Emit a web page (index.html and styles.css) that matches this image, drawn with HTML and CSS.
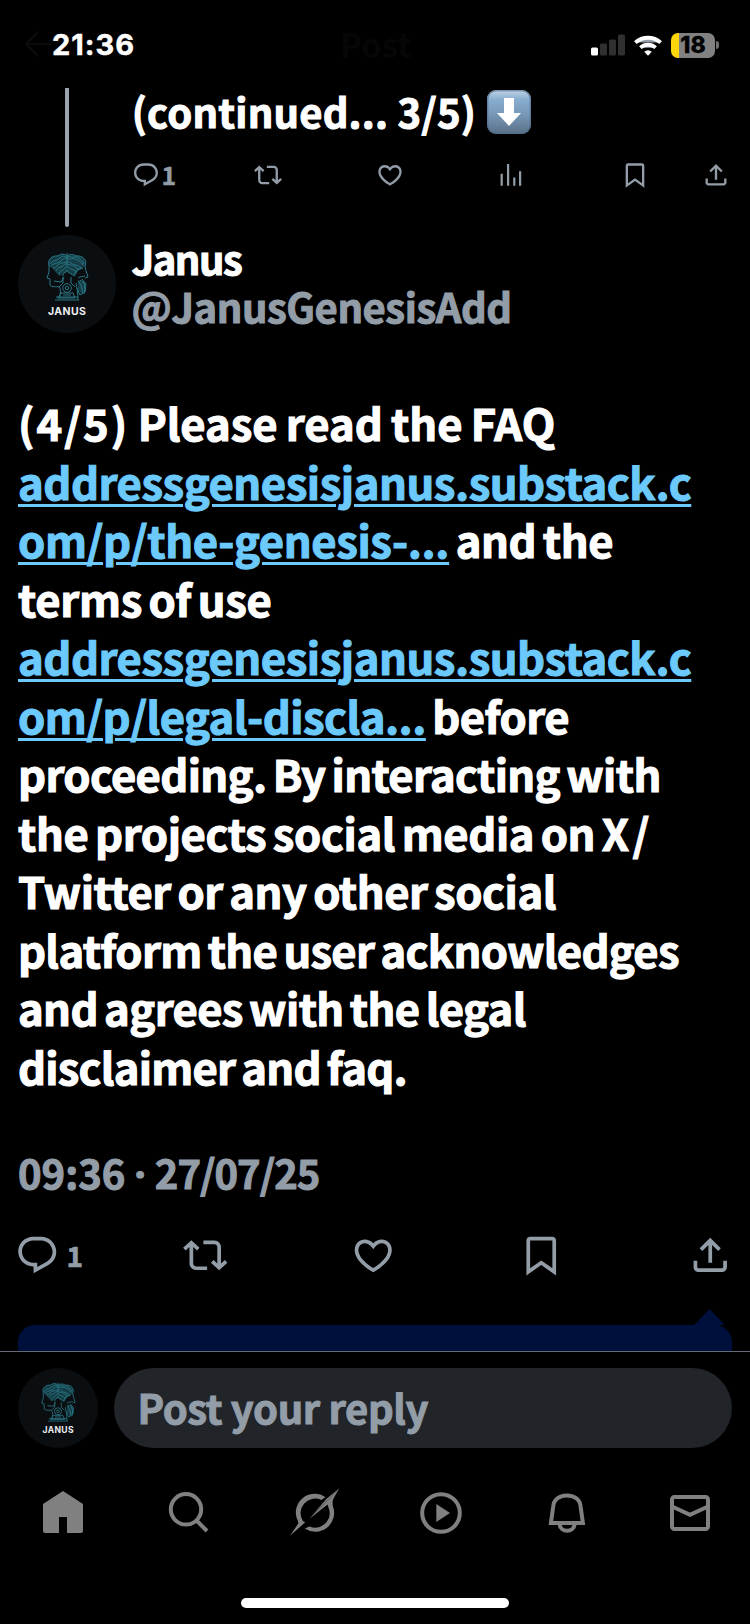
FILE: index.html
```html
<!DOCTYPE html>
<html lang="en">
<head>
<meta charset="utf-8">
<title>Post</title>
<link rel="stylesheet" href="styles.css">
</head>
<body>
<svg class="defs" aria-hidden="true">
  <symbol id="reply" viewBox="0 0 24 24"><path d="M1.751 10c0-4.42 3.584-8 8.005-8h4.366c4.49 0 8.129 3.64 8.129 8.13 0 2.96-1.607 5.68-4.196 7.11l-8.054 4.46v-3.69h-.067c-4.49.1-8.183-3.51-8.183-8.01zm8.005-6c-3.317 0-6.005 2.69-6.005 6 0 3.37 2.77 6.08 6.138 6.01l.351-.01h1.761v2.3l5.087-2.81c1.951-1.08 3.163-3.13 3.163-5.36 0-3.39-2.744-6.13-6.129-6.13H9.756z"/></symbol>
  <symbol id="repost" viewBox="0 0 24 24"><path d="M4.5 3.88l4.432 4.14-1.364 1.46L5.5 7.55V16.500c0 .8.700 1.500 1.500 1.500H13v2H7c-1.900 0-3.500-1.600-3.500-3.500V7.55L1.432 9.48.068 8.02 4.5 3.88zM17 6H11V4h6c1.900 0 3.500 1.600 3.500 3.500v8.95l2.068-1.93 1.364 1.46-4.432 4.14-4.432-4.14 1.364-1.46 2.068 1.93V7.500c0-.8-.7-1.500-1.500-1.500z"/></symbol>
  <symbol id="like" viewBox="0 0 24 24"><path d="M16.697 5.5c-1.222-.06-2.679.51-3.89 2.16l-.805 1.09-.806-1.09C9.984 6.01 8.526 5.44 7.304 5.5c-1.243.07-2.349.78-2.91 1.91-.552 1.12-.633 2.78.479 4.82 1.074 1.97 3.257 4.27 7.129 6.61 3.87-2.34 6.052-4.64 7.126-6.61 1.111-2.04 1.03-3.7.477-4.82-.561-1.13-1.666-1.84-2.908-1.91zm4.187 7.69c-1.351 2.48-4.001 5.12-8.379 7.67l-.503.3-.504-.3c-4.379-2.55-7.029-5.19-8.382-7.67-1.36-2.5-1.41-4.86-.514-6.67.887-1.79 2.647-2.91 4.601-3.01 1.651-.09 3.368.56 4.798 2.01 1.429-1.45 3.146-2.1 4.796-2.01 1.954.1 3.714 1.22 4.601 3.01.896 1.81.846 4.17-.514 6.67z"/></symbol>
  <symbol id="views" viewBox="0 0 24 24"><path d="M2.200 11h1.900v10.300H2.200zM7.700 2.600h1.900v18.700H7.700zM13 14.200h1.900v7.100H13zM18 8.700h1.900v12.600H18z"/></symbol>
  <symbol id="bookmark" viewBox="0 0 24 24"><path d="M4 4c0-1.100.9-2 2-2h12c1.100 0 2 .9 2 2v18.940l-8-5.710-8 5.710V4zm2 0v15.060l6-4.290 6 4.290V4H6z"/></symbol>
  <symbol id="share" viewBox="0 0 24 24"><path d="M12 2.59l5.7 5.7-1.41 1.42L13 6.41V16h-2V6.41l-3.3 3.3-1.41-1.42L12 2.59zM21 15l-.02 3.51c0 1.38-1.12 2.49-2.5 2.49H5.5C4.11 21 3 19.88 3 18.5V15h2v3.5c0 .28.22.5.5.5h12.98c.28 0 .5-.22.5-.5L19 15h2z"/></symbol>
  <symbol id="janus" viewBox="0 0 98 98">
    <circle cx="49" cy="49" r="49" fill="#0a0e11"/>
    <path d="M31 31c-2-6 3-11 9-10 3-3 8-2 9 0 2-2 7-2 9 0 6-1 12 4 9 10l-7 5-3 6-8-5-8 4-6-7zM60 45l7 2 1 8-4 5-4-6z" fill="#1c5762" fill-opacity=".65"/>
    <g fill="none" stroke="#2a7886" stroke-width="1">
      <path d="M31 31c-2-6 3-11 9-10 3-3 8-2 9 0 2-2 7-2 9 0 6-1 12 4 9 10M31 31v6l-2 6 3 1v6c2 3 6 1 9 2M67 31l1 5 2 6-3 1M41 52c3 4 1 8-1 12M37 65h24M38 62h22M58 48c1 5 2 10 2 17"/>
      <path d="M32 29c4-5 6-2 10-6s6 0 8-1 5 1 7 0 6 2 9 7M33 31c4-4 8-2 11-6s7 0 9-1 8 0 12 6M35 33c5 0 4-5 9-5s5-3 9 0 6 1 10 5M38 36c2-5 6-3 8-6s6 1 7 0 5 3 8 4M41 39c2-5 5-3 6-6s5 1 6 1 4 2 6 3M45 41c0-4 3-3 4-6 1 4 4 2 5 5M49 18v13"/>
      <path d="M65 33l-6 2-4 6M36 46l7 1 3-5M45 42v6l-4 4M53 42v6l4 4"/>
      <circle cx="49" cy="53" r="4.300"/><circle cx="49" cy="53" r="1.700"/>
      <path d="M60 43c2-2 5-1 7-2M60 46l3 4 2 8-3 2-3-7M62 45l4 3 1 6-1 5M64 44l4 5-1 8M43 58l-2 5h16l-2-5zM45 60h8"/>
    </g>
    <text x="49" y="79.500" text-anchor="middle" textLength="38" class="logo-text">JANUS</text>
  </symbol>
</svg>

<header class="status">
  <svg class="ghost-back" viewBox="0 0 26 26"><path d="M13 1L1 13l12 12M1 13h25"/></svg>
  <span class="time">21:36</span>
  <span class="ghost-title">Post</span>
  <div class="status-icons">
    <svg class="signal" viewBox="0 0 34 22"><rect x="0" y="13.500" width="7" height="8" rx="1.500" fill="#fff"/><g fill="#303030"><rect x="9" y="9.500" width="7" height="12" rx="1.500"/><rect x="18" y="5.500" width="7" height="16" rx="1.500"/><rect x="27" y="0.500" width="7" height="21" rx="1.500"/></g></svg>
    <svg class="wifi" viewBox="0 0 28 21" fill="none" stroke="#fff"><path d="M1.400 7.600a18.500 18.500 0 0 1 25.200 0" stroke-width="4"/><path d="M6.400 12.700a11.300 11.300 0 0 1 15.200 0" stroke-width="3.800"/><path d="M14 20.700l-3.800-3.900a5.800 5.800 0 0 1 7.600 0z" fill="#fff" stroke="none"/></svg>
    <div class="battery"><span class="battery-num">18</span></div>
    <span class="battery-cap"></span>
  </div>
</header>

<main class="thread">
  <article class="prev">
    <div class="rail"></div>
    <div class="prev-body">
      <div class="prev-text"><span class="prev-label">(continued... 3/5)</span>
        <svg class="emoji" viewBox="0 0 44 44"><defs><linearGradient id="sky" x1="0" y1="0" x2="0" y2="1"><stop offset="0" stop-color="#c2d6e6"/><stop offset=".22" stop-color="#88add0"/><stop offset=".55" stop-color="#7898b8"/><stop offset="1" stop-color="#587087"/></linearGradient></defs><rect width="44" height="44" rx="9" fill="url(#sky)"/><rect x=".7" y=".7" width="42.600" height="42.600" rx="8.500" fill="none" stroke="#4d6b88" stroke-opacity=".6" stroke-width="1.400"/><path d="M17 8h10v15h7L22 36 10 23h7z" fill="#fff"/></svg>
      </div>
      <div class="prev-actions">
        <div class="count-wrap"><svg><use href="#reply"/></svg><span>1</span></div>
        <svg><use href="#repost"/></svg>
        <svg><use href="#like"/></svg>
        <svg><use href="#views"/></svg>
        <svg><use href="#bookmark"/></svg>
        <svg><use href="#share"/></svg>
      </div>
    </div>
  </article>

  <article class="post">
    <div class="author">
      <svg class="avatar"><use href="#janus"/></svg>
      <div class="names"><span class="name">Janus</span><span class="handle">@JanusGenesisAdd</span></div>
    </div>
    <p class="body">
      <span class="line l1"><span class="part">(4/5)</span> Please read the FAQ</span>
      <span class="line l2"><a>addressgenesisjanus.substack.c</a></span>
      <span class="line l3"><a>om/p/the-genesis-...</a> and the</span>
      <span class="line l4">terms of use</span>
      <span class="line l2"><a>addressgenesisjanus.substack.c</a></span>
      <span class="line l6"><a>om/p/legal-discla...</a> before</span>
      <span class="line l7">proceeding. By interacting with</span>
      <span class="line l8">the projects social media on <span class="wide">X/</span></span>
      <span class="line l9">Twitter or any other social</span>
      <span class="line l10">platform the user acknowledges</span>
      <span class="line l11">and agrees with the legal</span>
      <span class="line l12">disclaimer and faq.</span>
    </p>
    <time class="date">09:36 <span class="dot">·</span> <span class="day">27/07/25</span></time>
    <div class="actions">
      <div class="count-wrap"><svg><use href="#reply"/></svg><span>1</span></div>
      <svg><use href="#repost"/></svg>
      <svg><use href="#like"/></svg>
      <svg><use href="#bookmark"/></svg>
      <svg><use href="#share"/></svg>
    </div>
    <div class="banner"></div>
  </article>
</main>

<section class="reply-bar">
  <svg class="avatar-sm"><use href="#janus"/></svg>
  <div class="reply-field"><span>Post your reply</span></div>
</section>

<nav class="tabs">
  <svg viewBox="0 0 50 50"><path d="M25 3l20 13v27q0 2-2 2H29V29h-8v16H7q-2 0-2-2V16z"/></svg>
  <svg viewBox="0 0 50 50" class="stroked"><circle cx="22" cy="21.300" r="15.200"/><path d="M32.500 32.500L43 43"/></svg>
  <svg viewBox="0 0 50 50"><path d="M35.500 9.200A18.800 18.800 0 0 0 8 33.300L8.300 35.500 0 47.700 15.300 34.300 13 33.200A14.500 14.500 0 0 1 31.200 12z"/><path d="M49.300.3L43.500 10.500Q42 14 43 18.500A18.800 18.800 0 0 1 14.800 40.500L19.500 38.400A14.500 14.500 0 0 0 39.300 22L37.500 16.500 19.300 31z"/><path d="M49.300.3L19.300 31l17-20z"/></svg>
  <svg viewBox="0 0 50 50" class="stroked"><circle cx="25" cy="25" r="18.800"/><path class="solid" d="M20.300 16L34 25l-13.700 9z"/></svg>
  <svg viewBox="0 0 50 50" class="stroked"><path d="M8.900 35L11.200 18.500C12.200 3.700 37.600 3.700 38.600 18.500L40.900 35z"/><path d="M17.600 36.500c1 8.400 14 8.400 15 0"/></svg>
  <svg viewBox="0 0 50 50" class="stroked"><rect x="4" y="9" width="36" height="32" rx="2.500"/><path d="M4 18.500l18 8.400 18-8.400"/></svg>
</nav>
<div class="home-indicator"></div>
</body>
</html>
```

FILE: styles.css
```css
* { box-sizing: border-box; }
body {
  margin: 0;
  width: 750px;
  height: 1624px;
  overflow: hidden;
  background: #000;
  color: #fff;
  font-family: "Noto Sans CJK SC", "Noto Sans", sans-serif;
  font-weight: 700;
  display: flex;
  flex-direction: column;
}
svg { display: block; flex: none; fill: #939da8; }
.defs { position: absolute; width: 0; height: 0; }
.logo-text { font: 700 10.5px Inter, sans-serif; fill: #eceff1; -webkit-text-stroke: 0; }

.status {
  height: 88px;
  flex: none;
  position: relative;
  display: flex;
  justify-content: space-between;
  align-items: flex-start;
  padding: 30px 31px 0 52px;
  font-family: Inter, sans-serif;
}
.time { font-size: 29px; line-height: 30px; letter-spacing: 1px; -webkit-text-stroke: .5px; }
.ghost-back { position: absolute; left: 25px; top: 31px; width: 26px; height: 26px; fill: none; stroke: #0b0b0b; stroke-width: 2.5; }
.ghost-title { position: absolute; left: 340px; top: 20px; font: 700 33px/48px "Noto Sans CJK SC", sans-serif; color: #060606; }
.status-icons { display: flex; align-items: center; height: 30px; }
.signal { width: 34px; height: 22px; }
.wifi { width: 28px; height: 21px; margin-left: 9px; }
.battery {
  width: 44px;
  height: 25px;
  margin-left: 9px;
  border-radius: 7px;
  background: linear-gradient(90deg, #ffd60a 8.5px, #818181 8.5px);
  color: #000;
  text-align: center;
}
.battery-num { display: block; font-size: 23px; line-height: 25px; font-weight: 800; -webkit-text-stroke: .3px; }
.battery-cap { width: 3px; height: 8px; margin-left: 1px; border-radius: 0 3px 3px 0; background: #707070; }

.thread { height: 1263px; flex: none; overflow: hidden; display: flex; flex-direction: column; }
.prev { display: flex; height: 147px; flex: none; padding-left: 65px; }
.rail { width: 4px; height: 139px; background: #9aa4b1; border-radius: 0 0 2px 2px; }
.prev-body { flex: 1; padding-left: 62.8px; }
.prev-text { display: flex; height: 73px; align-items: flex-start; padding-top: 2px; }
.prev-label { width: 355.5px; font-size: 40px; line-height: 42px; letter-spacing: .2px; white-space: nowrap; -webkit-text-stroke: 1px; }
.emoji { width: 44px; height: 44px; }
.prev-actions { display: flex; }
.prev-actions svg { width: 28px; height: 28px; }
.prev-actions > * { width: 122px; flex: none; }
.prev-actions > svg { margin-right: 94px; }
.count-wrap { display: flex; align-items: center; color: #939da8; -webkit-text-stroke: .7px; }
.count-wrap svg { -webkit-text-stroke: 0; }
.prev-actions .count-wrap span { font-size: 24px; line-height: 28px; margin-left: 2px; }
.prev-actions > svg:nth-child(4) { margin-right: 95px; }
.prev-actions > svg:nth-child(5) { margin-right: 53px; }
.prev-actions > svg:last-child { margin-right: 0; }

.post { flex: 1; display: flex; flex-direction: column; padding: 0 18px; }
.author { display: flex; height: 158px; flex: none; }
.avatar { width: 98px; height: 98px; }
.names { display: flex; flex-direction: column; margin-top: -1px; padding-left: 15.5px; font-size: 40px; line-height: 48px; -webkit-text-stroke: 1px; }
.name { letter-spacing: -1.5px; }
.handle { color: #939da8; letter-spacing: -.45px; }
.body { margin: 0; font-size: 43.6px; line-height: 58.5px; white-space: nowrap; -webkit-text-stroke: 1.1px; }
.line { display: block; word-spacing: -3px; }
.l1 { letter-spacing: -.05px; word-spacing: -1.5px; }
.part { letter-spacing: 2px; }
.l2 { letter-spacing: -.45px; }
.l3 { letter-spacing: -.38px; }
.l4 { letter-spacing: -.3px; }
.l6 { letter-spacing: -.52px; }
.l7 { letter-spacing: -.65px; }
.l8 { letter-spacing: -.38px; }
.wide { letter-spacing: 3.5px; }
.l9 { letter-spacing: -.44px; }
.l10 { letter-spacing: -.7px; }
.l11 { letter-spacing: -.64px; }
.l12 { letter-spacing: -.78px; }
.body a { color: #6bc9fb; text-decoration: underline; text-decoration-thickness: 3px; text-underline-offset: 4px; }
.date { color: #939da8; font-size: 40px; line-height: 60px; margin-top: 47px; white-space: nowrap; -webkit-text-stroke: 1px; }
.dot { font-family: "Noto Sans", sans-serif; line-height: 1; }
.day { letter-spacing: -1px; }
.actions { display: flex; justify-content: space-between; height: 45px; margin: 30.5px 0 0 -3px; }
.actions svg { width: 44.5px; height: 44.5px; }
.actions .count-wrap { width: 44.5px; }
.actions .count-wrap span { font-size: 28px; line-height: 43px; margin-left: 7px; }
.banner { position: relative; flex: none; height: 60px; margin-top: 47.500px; border-radius: 17px; background: #00103c; }
.banner::before {
  content: "";
  position: absolute;
  right: 7px;
  top: -16px;
  width: 31px;
  height: 16px;
  background: #00103c;
  clip-path: polygon(50% 0, 100% 100%, 0 100%);
}

.reply-bar { display: flex; flex: none; height: 97px; border-top: 1px solid #646973; padding: 16px 18px 0; gap: 16px; }
.avatar-sm { width: 80px; height: 80px; }
.reply-field { flex: 1; height: 80px; border-radius: 40px; background: #212428; color: #939da8; font-size: 40px; line-height: 78px; letter-spacing: -.4px; padding-left: 23.5px; -webkit-text-stroke: 1px; }

.tabs { display: flex; justify-content: space-between; flex: none; padding: 40px 32px 0 38px; height: 150px; }
.tabs svg { width: 50px; height: 50px; fill: #808080; }
.tabs svg.stroked { fill: none; stroke: #808080; stroke-width: 4; }
.tabs .solid { fill: #808080; stroke: none; }
.home-indicator { width: 268px; height: 10px; flex: none; align-self: center; border-radius: 5px; background: #fff; }
```
